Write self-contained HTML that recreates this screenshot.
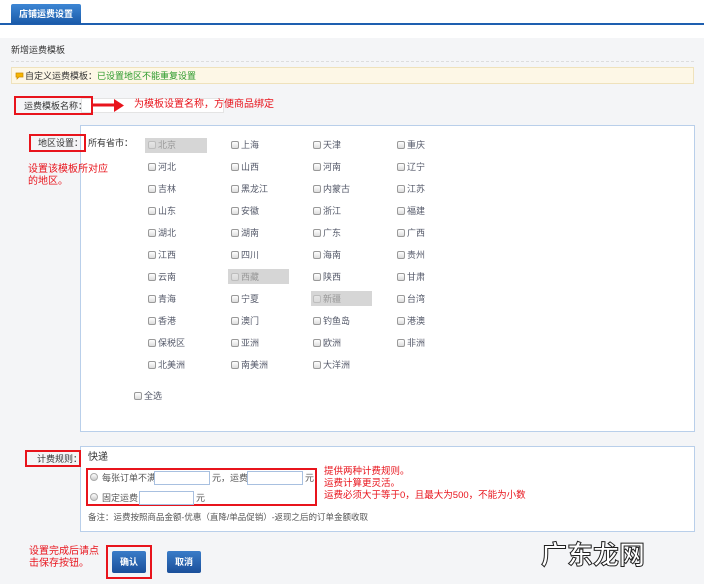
<!DOCTYPE html>
<html><head><meta charset="utf-8">
<style>
*{margin:0;padding:0;box-sizing:border-box}
body{width:704px;height:584px;overflow:hidden;background:#f4f5f7;font-family:"Liberation Sans","Noto Sans CJK SC",sans-serif;font-size:9px;color:#333;position:relative}
.a{position:absolute;white-space:nowrap;line-height:12px}
.red{color:#e8141c}
.rb{position:absolute;border:2px solid #e8141c}
.cb{position:absolute;width:8px;height:8px;border:1px solid #999;border-radius:2px;background:linear-gradient(#fff,#ddd)}
.pv{position:absolute;font-size:9px;color:#555a6a;line-height:12px}
.dis{position:absolute;background:#d6d6d6}
.btn{position:absolute;width:34px;height:22px;background:linear-gradient(#3a7cc8,#1a4f9a);color:#fff;font-weight:bold;font-size:9px;text-align:center;line-height:22px;border-radius:2px}
.inp{position:absolute;height:14px;background:#fff;border:1px solid #a8c0e0}
.rd{position:absolute;width:8px;height:8px;border-radius:50%;border:1px solid #aaa;background:linear-gradient(#fff,#ccc)}
</style></head><body>
<div class="a" style="left:0;top:0;width:704px;height:38px;background:#fff"></div>
<div class="a" style="left:0;top:23px;width:704px;height:2px;background:#1e5fb0"></div>
<div class="a" style="left:11px;top:4px;width:70px;height:20px;background:linear-gradient(#3d86d4,#1a5aa8);color:#fff;font-weight:bold;font-size:9px;text-align:center;line-height:20px;border-radius:2px 2px 0 0">店铺运费设置</div>
<div class="a" style="left:11px;top:44px;font-size:9px;color:#333">新增运费模板</div>
<div class="a" style="left:11px;top:61px;width:683px;border-top:1px dashed #ddd"></div>
<div class="a" style="left:11px;top:67px;width:683px;height:17px;background:#fdf7e6;border:1px solid #efe2bc"></div>
<svg class="a" style="left:15px;top:72px" width="9" height="8"><path d="M1 1h7v4H4l-2 2V5H1z" fill="#f6b400" stroke="#c98a00" stroke-width=".7"/></svg>
<div class="a" style="left:25px;top:70px;color:#333">自定义运费模板：<span style="color:#2a9a2a">已设置地区不能重复设置</span></div>

<div class="a" style="left:81px;top:98px;width:143px;height:15px;background:#fff;border:1px solid #e4e4e4"></div>
<div class="rb" style="left:14px;top:96px;width:79px;height:19px"></div>
<div class="a" style="left:24px;top:100px;color:#333">运费模板名称：</div>
<svg class="a" style="left:92px;top:99px" width="34" height="14"><path d="M0 6h22" stroke="#e8141c" stroke-width="3"/><path d="M22 0l10 6.5-10 6.5z" fill="#e8141c"/></svg>
<div class="a red" style="left:134px;top:99px;font-size:10px">为模板设置名称，方便商品绑定</div>

<div class="a" style="left:80px;top:125px;width:615px;height:307px;background:#fff;border:1px solid #b9cfea"></div>
<div class="rb" style="left:29px;top:134px;width:57px;height:18px"></div>
<div class="a" style="left:38px;top:137px;color:#333">地区设置：</div>
<div class="a" style="left:88px;top:137px;color:#333">所有省市：</div>
<div class="a red" style="left:28px;top:164px;font-size:10px;line-height:12px">设置该模板所对应<br>的地区。</div>

<div class="dis" style="left:145px;top:138px;width:62px;height:15px"></div>
<div class="dis" style="left:228px;top:269px;width:61px;height:15px"></div>
<div class="dis" style="left:311px;top:291px;width:61px;height:15px"></div>

<div id="g"></div>
<script>
var p=[["北京","上海","天津","重庆"],["河北","山西","河南","辽宁"],["吉林","黑龙江","内蒙古","江苏"],["山东","安徽","浙江","福建"],["湖北","湖南","广东","广西"],["江西","四川","海南","贵州"],["云南","西藏","陕西","甘肃"],["青海","宁夏","新疆","台湾"],["香港","澳门","钓鱼岛","港澳"],["保税区","亚洲","欧洲","非洲"],["北美洲","南美洲","大洋洲",""]];
var cx=[148,231,313,397],h="";
for(var r=0;r<p.length;r++)for(var c=0;c<4;c++){var n=p[r][c];if(!n)continue;var y=145+22*r;var d=(n=="北京"||n=="西藏"||n=="新疆");
h+='<div class="cb" style="left:'+cx[c]+'px;top:'+(y-4)+'px;'+(d?'opacity:.4':'')+'"></div><div class="pv" style="left:'+(cx[c]+10)+'px;top:'+(y-6)+'px;'+(d?'color:#999':'')+'">'+n+'</div>';}
h+='<div class="cb" style="left:134px;top:392px"></div><div class="pv" style="left:144px;top:390px">全选</div>';
document.getElementById("g").innerHTML=h;
</script>

<div class="a" style="left:80px;top:446px;width:615px;height:86px;background:#fff;border:1px solid #b9cfea"></div>
<div class="rb" style="left:25px;top:450px;width:56px;height:17px"></div>
<div class="a" style="left:37px;top:453px">计费规则：</div>
<div class="a" style="left:88px;top:452px;font-size:10px;color:#333">快递</div>
<div class="rb" style="left:86px;top:468px;width:231px;height:38px"></div>
<div class="rd" style="left:90px;top:473px"></div>
<div class="a" style="left:102px;top:472px;color:#555">每张订单不满</div>
<div class="inp" style="left:154px;top:471px;width:56px"></div>
<div class="a" style="left:212px;top:472px;color:#555">元，运费</div>
<div class="inp" style="left:247px;top:471px;width:56px"></div>
<div class="a" style="left:305px;top:472px;color:#555">元</div>
<div class="rd" style="left:90px;top:493px"></div>
<div class="a" style="left:102px;top:492px;color:#555">固定运费</div>
<div class="inp" style="left:139px;top:491px;width:55px"></div>
<div class="a" style="left:196px;top:492px;color:#555">元</div>
<div class="a red" style="left:324px;top:466px;font-size:9.5px;line-height:12px">提供两种计费规则。<br>运费计算更灵活。<br>运费必须大于等于0，且最大为500，不能为小数</div>
<div class="a" style="left:88px;top:511px;color:#555;font-size:8.5px">备注：运费按照商品金额-优惠（直降/单品促销）-返现之后的订单金额收取</div>

<div class="a red" style="left:29px;top:546px;font-size:10px;line-height:12px">设置完成后请点<br>击保存按钮。</div>
<div class="rb" style="left:106px;top:545px;width:46px;height:34px"></div>
<div class="btn" style="left:112px;top:551px">确认</div>
<div class="btn" style="left:167px;top:551px">取消</div>
<div class="a" style="left:541px;top:540px;font-size:26px;line-height:30px;color:#fff;-webkit-text-stroke:1px #222;font-weight:bold">广东龙网</div>
</body></html>
